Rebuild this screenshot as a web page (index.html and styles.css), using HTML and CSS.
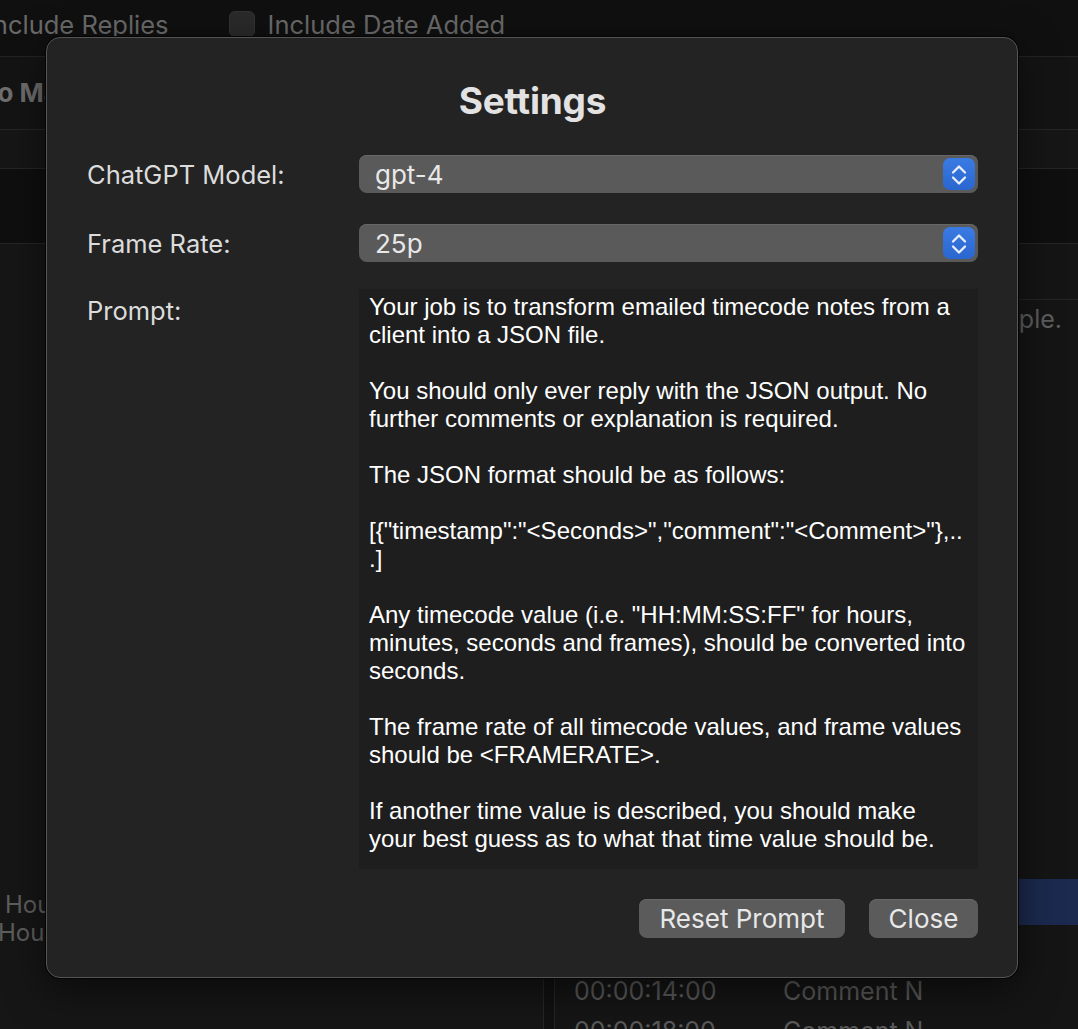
FILE: index.html
```html
<!DOCTYPE html>
<html lang="en">
<head>
<meta charset="utf-8">
<title>Settings</title>
<link rel="stylesheet" href="styles.css">
</head>
<body>
<div class="app">
  <div class="toolbar">
    <span class="opt opt-first">Include Replies</span>
    <span class="opt"><span class="check"></span>Include Date Added</span>
  </div>
  <div class="header"><span class="app-title">Notes to Markers</span></div>
  <div class="band band-a"></div>
  <div class="band band-b"></div>
  <div class="split">
    <div class="pane pane-left">
      <div class="left-lines">
        <div class="left-line l1">Hours</div>
        <div class="left-line l2">Hours</div>
      </div>
    </div>
    <div class="divider"></div>
    <div class="pane pane-right">
      <div class="hint">Paste the notes here, for example.</div>
      <div class="row-selected"></div>
      <div class="row"><span class="tc">00:00:14:00</span><span class="cm">Comment N</span></div>
      <div class="row"><span class="tc">00:00:18:00</span><span class="cm">Comment N</span></div>
    </div>
  </div>
</div>

<div class="dialog">
  <div class="dialog-title">Settings</div>
  <div class="field field-1">
    <div class="label">ChatGPT Model:</div>
    <div class="popup">
      <span class="popup-value">gpt-4</span>
      <span class="stepper"><svg viewBox="0 0 32 32" width="32" height="32"><path d="M10 14.5 L16 8.5 L22 14.5" /><path d="M10 19.5 L16 25.5 L22 19.5" /></svg></span>
    </div>
  </div>
  <div class="field field-2">
    <div class="label">Frame Rate:</div>
    <div class="popup">
      <span class="popup-value">25p</span>
      <span class="stepper"><svg viewBox="0 0 32 32" width="32" height="32"><path d="M10 14.5 L16 8.5 L22 14.5" /><path d="M10 19.5 L16 25.5 L22 19.5" /></svg></span>
    </div>
  </div>
  <div class="field field-3">
    <div class="label label-top">Prompt:</div>
    <div class="prompt">Your job is to transform emailed timecode notes from a
client into a JSON file.

You should only ever reply with the JSON output. No
further comments or explanation is required.

The JSON format should be as follows:

[{"timestamp":"&lt;Seconds&gt;","comment":"&lt;Comment&gt;"},..
.]

Any timecode value (i.e. "HH:MM:SS:FF" for hours,
minutes, seconds and frames), should be converted into
seconds.

The frame rate of all timecode values, and frame values
should be &lt;FRAMERATE&gt;.

If another time value is described, you should make
your best guess as to what that time value should be.</div>
  </div>
  <div class="actions">
    <button class="btn btn-reset">Reset Prompt</button>
    <button class="btn btn-close">Close</button>
  </div>
</div>
</body>
</html>
```
FILE: styles.css
```css
html, body {
  margin: 0;
  padding: 0;
  background: #141414;
  overflow: hidden;
}

body {
  width: 1078px;
  height: 1029px;
  position: relative;
  font-family: Inter, "Noto Sans", sans-serif;
}

.app {
  width: 1078px;
  height: 1029px;
  display: flex;
  flex-direction: column;
  background: #151515;
  color: #666;
}

.toolbar {
  flex: none;
  background: #101010;
  border-bottom: 1px solid #242424;
  display: flex;
  align-items: center;
  gap: 60px;
  padding-bottom: 8px;
  box-sizing: border-box;
  height: 57px;
}

.opt {
  font-size: 25.5px;
  color: #6a6a6a;
  display: flex;
  align-items: center;
  gap: 13px;
  white-space: nowrap;
}

.opt-first {
  margin-left: -14px;
}

.check {
  width: 26px;
  height: 26px;
  border-radius: 6px;
  background: #2a2a2a;
  border: 1px solid #333;
  box-sizing: border-box;
}

.header {
  height: 73px;
  flex: none;
  background: #141414;
  border-bottom: 1px solid #262626;
  box-sizing: border-box;
  display: flex;
  align-items: center;
  padding-bottom: 2px;
}

.app-title {
  font-size: 26px;
  font-weight: 700;
  color: #6e6e6e;
  margin-left: -93px;
  white-space: nowrap;
}

.band {
  flex: none;
  box-sizing: border-box;
  border-bottom: 1px solid #262626;
}

.band-a {
  height: 39px;
  background: #161616;
}

.band-b {
  height: 75px;
  background: #0f0f0f;
}

.split {
  flex: 1;
  display: grid;
  grid-template-columns: 543px 12px 1fr;
  min-height: 0;
}

.pane {
  position: relative;
  min-width: 0;
}

.pane-left {
  background: #161616;
  display: flex;
  flex-direction: column;
  justify-content: flex-start;
}

.left-lines {
  margin-top: 647px;
  font-size: 24px;
  line-height: 28px;
  color: #5e5e5e;
}

.left-line.l1 { margin-left: 5px; }
.left-line.l2 { margin-left: -2px; }

.divider {
  background: #111;
  border-left: 1px solid #262626;
  border-right: 1px solid #262626;
  box-sizing: border-box;
}

.pane-right {
  background: #151515;
  display: flex;
  flex-direction: column;
  border-top: 1px solid #262626;
  margin-top: 55px;
}

.hint {
  text-align: right;
  padding-right: 16px;
  font-size: 25px;
  color: #5e5e5e;
  white-space: nowrap;
  overflow: hidden;
  margin-top: 4px;
  line-height: 30px;
}

.row-selected {
  margin-top: 545px;
  height: 46px;
  background: #1b2a4e;
}

.row {
  display: flex;
  height: 40px;
  align-items: center;
  font-size: 25px;
  color: #5a5a5a;
  padding-left: 19px;
  margin-top: 46px;
}

.row + .row {
  margin-top: 0;
}

.tc {
  width: 209px;
}

/* ---------- Dialog (sheet) ---------- */

.dialog {
  position: absolute;
  left: 46px;
  top: 37px;
  width: 972px;
  height: 941px;
  box-sizing: border-box;
  background: #232323;
  border: 1px solid #555;
  border-radius: 14px;
  box-shadow: 0 0 0 1px #050505, 0 12px 40px rgba(0, 0, 0, 0.55);
  padding: 0 39px 38px 40px;
  display: flex;
  flex-direction: column;
  color: #dedede;
}

.dialog-title {
  height: 117px;
  padding-top: 7px;
  box-sizing: border-box;
  display: flex;
  align-items: center;
  justify-content: center;
  font-size: 37px;
  font-weight: 700;
  color: #e2e2e2;
  letter-spacing: -0.2px;
}

.field {
  display: flex;
  align-items: center;
}

.field-2 { margin-top: 31px; }
.field-3 {
  margin-top: 27px;
  align-items: flex-start;
}

.label {
  width: 272px;
  flex: none;
  font-size: 25.5px;
  color: #dcdcdc;
}

.label-top {
  padding-top: 6px;
}

.popup {
  flex: 1;
  height: 38px;
  background: #5a5a5a;
  border-radius: 8px;
  box-shadow: inset 0 1px 0 #676767;
  display: flex;
  align-items: center;
  justify-content: space-between;
  padding-left: 16px;
  padding-right: 3px;
}

.popup-value {
  font-size: 26px;
  color: #e8e8e8;
}

.stepper {
  width: 32px;
  height: 32px;
  border-radius: 7px;
  background: linear-gradient(#3a7be3, #2a66cf);
  display: flex;
}

.stepper svg {
  fill: none;
  stroke: #e9effb;
  stroke-width: 2.3;
  stroke-linecap: round;
  stroke-linejoin: round;
}

.prompt {
  flex: 1;
  height: 580px;
  box-sizing: border-box;
  background: #1e1e1e;
  padding: 4px 10px 0 10px;
  font-family: "Liberation Sans", Arial, sans-serif;
  font-size: 24px;
  line-height: 28px;
  color: #ffffff;
  white-space: pre;
  overflow: hidden;
}

.actions {
  margin-top: 30px;
  display: flex;
  justify-content: flex-end;
  gap: 24px;
}

.btn {
  height: 39px;
  border: none;
  border-radius: 8px;
  background: #5b5b5b;
  box-shadow: inset 0 1px 0 #666;
  color: #e8e8e8;
  font-family: Inter, "Noto Sans", sans-serif;
  font-size: 26px;
  padding: 0;
}

.btn-reset { width: 206px; }
.btn-close { width: 109px; }
```
